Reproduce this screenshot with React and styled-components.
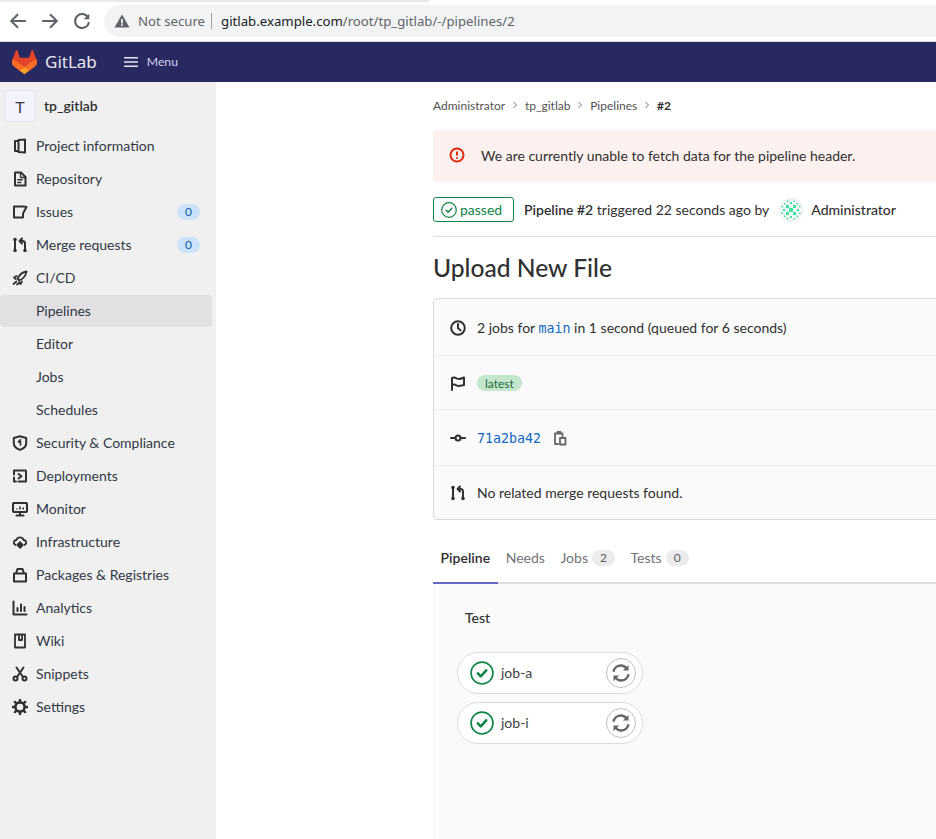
import React from 'react'
import styled, { createGlobalStyle } from 'styled-components'

const Global = createGlobalStyle`
    html, body {
        margin: 0;
        padding: 0;
        background: #fff;
        overflow: hidden;
    }
    * {
        box-sizing: border-box;
    }
`

const Page = styled.div`
    width: 936px;
    height: 839px;
    display: flex;
    flex-direction: column;
    overflow: hidden;
    font-family: Lato, "Liberation Sans", sans-serif;
    font-size: 14px;
    color: #303030;
`

const Browser = styled.div`
    position: relative;
    height: 42px;
    flex: none;
    display: flex;
    align-items: center;
    padding: 1px 0 0 9px;
    background: #fff;
    border-bottom: 1px solid #dadce0;
    &::before {
        content: '';
        position: absolute;
        left: 0;
        top: 0;
        width: 429px;
        height: 2px;
        background: #e8eaed;
    }
    svg {
        flex: none;
    }
`

const NavIcons = styled.div`
    display: flex;
    align-items: center;
    gap: 14px;
    margin-right: 13px;
    color: #5f6368;
`

const AddressBar = styled.div`
    flex: 1;
    height: 32px;
    display: flex;
    align-items: center;
    padding-left: 10px;
    border-radius: 16px 0 0 16px;
    background: #f1f3f4;
    font-family: "Noto Sans", sans-serif;
    font-size: 13.2px;
    color: #202124;
`

const Insecure = styled.span`
    margin-left: 8px;
    padding-right: 6px;
    color: #5f6368;
    border-right: 1px solid #9aa0a6;
    line-height: 16px;
`

const Url = styled.span`
    margin-left: 9px;
    span {
        color: #5f6368;
    }
`

const Navbar = styled.header`
    height: 40px;
    flex: none;
    display: flex;
    align-items: center;
    padding-left: 12px;
    background: #292961;
`

const Brand = styled.span`
    margin-left: 8px;
    padding-bottom: 1px;
    font-family: "Noto Sans", sans-serif;
    font-size: 17px;
    color: #e7e7f3;
`

const MenuButton = styled.span`
    display: flex;
    align-items: center;
    gap: 8px;
    margin-left: 26px;
    padding-bottom: 1px;
    font-size: 12.2px;
    color: #d1d1f0;
`

const Body = styled.div`
    flex: 1;
    display: flex;
    min-height: 0;
`

const Sidebar = styled.nav`
    width: 216px;
    flex: none;
    padding: 8px 4px 0 0;
    background: #f0f0f0;
`

const ProjectRow = styled.div`
    height: 32px;
    display: flex;
    align-items: center;
    gap: 8px;
    margin-bottom: 7px;
    padding-left: 4px;
`

const ProjectName = styled.span`
    padding-bottom: 2px;
    font-weight: 600;
    color: #303030;
`

const ProjectAvatar = styled.div`
    width: 32px;
    height: 32px;
    display: flex;
    align-items: center;
    justify-content: center;
    border: 1px solid #e3e3ee;
    border-radius: 4px;
    background: #f3f3fe;
    font-size: 16px;
    font-weight: 400;
    color: #3a3a44;
`

const NavItem = styled.div`
    height: 33px;
    display: flex;
    align-items: center;
    padding-left: ${p => (p.$sub ? '36px' : '12px')};
    padding-right: 12px;
    padding-bottom: 1px;
    border-top: 1px solid transparent;
    border-radius: 4px;
    background: ${p => (p.$active ? '#e1e1e4' : 'transparent')};
    background-clip: padding-box;
    color: #303845;
    svg {
        flex: none;
        margin-right: 8px;
        color: #303030;
    }
`

const NavLabel = styled.span`
    flex: 1;
`

const CountPill = styled.span`
    width: 23px;
    height: 16px;
    display: flex;
    align-items: center;
    justify-content: center;
    border-radius: 8px;
    background: #cbe2f9;
    font-size: 12px;
    color: #0b5cad;
`

const Main = styled.main`
    flex: 1;
    min-width: 0;
    padding-left: 217px;
    overflow: hidden;
`

const Content = styled.div`
    width: 620px;
`

const Crumbs = styled.div`
    height: 48px;
    display: flex;
    align-items: center;
    gap: 7.9px;
    padding-bottom: 2px;
    font-size: 12px;
    color: #525252;
    svg {
        flex: none;
        color: #737278;
    }
    b {
        color: #303030;
    }
`

const Alert = styled.div`
    height: 52px;
    display: flex;
    align-items: center;
    gap: 16px;
    padding: 0 0 2px 16px;
    background: #fcf1ef;
    color: #303030;
`

const StatusRow = styled.div`
    height: 55px;
    display: flex;
    align-items: center;
    border-bottom: 1px solid #dcdcde;
    padding-top: 1px;
    b {
        font-weight: 600;
    }
`

const StatusBadge = styled.span`
    width: 81px;
    height: 25px;
    display: flex;
    align-items: center;
    gap: 3px;
    padding-left: 7px;
    margin-right: 10px;
    border: 1px solid #108548;
    border-radius: 3px;
    color: #108548;
`

const Avatar = styled.span`
    display: flex;
    margin: 0 8px 0 10px;
`

const Author = styled.span`
    font-weight: 500;
`

const Title = styled.h1`
    margin: 0;
    height: 61px;
    display: flex;
    align-items: center;
    font-size: 24.6px;
    font-weight: 500;
    color: #303030;
`

const Card = styled.section`
    border: 1px solid #dcdcde;
    border-radius: 4px;
    background: #fafafa;
`

const CardRow = styled.div`
    height: ${p => p.$h}px;
    display: flex;
    align-items: center;
    gap: 11px;
    padding: ${p => (p.$last ? 0 : 1)}px 0 0 16px;
    border-bottom: ${p => (p.$last ? 'none' : '1px solid #ececef')};
    svg {
        flex: none;
    }
`

const Mono = styled.a`
    font-family: "DejaVu Sans Mono", monospace;
    font-size: 13.3px;
    color: #1068bf;
`

const LatestPill = styled.span`
    height: 16px;
    padding: 0 8px;
    display: flex;
    align-items: center;
    border-radius: 8px;
    background: #c3e6cd;
    font-size: 12px;
    color: #24663b;
`

const Tabs = styled.div`
    height: 64px;
    display: flex;
    align-items: stretch;
    padding-top: 20px;
    border-bottom: 2px solid #dcdcde;
`

const Tab = styled.div`
    display: flex;
    align-items: center;
    gap: 4px;
    padding: 0 8px 7px 7.6px;
    margin-bottom: -2px;
    color: ${p => (p.$active ? '#303030' : '#737278')};
    font-weight: ${p => (p.$active ? 600 : 400)};
    border-bottom: 2px solid ${p => (p.$active ? '#6666c4' : 'transparent')};
`

const TabCount = styled.span`
    width: 23px;
    height: 16px;
    display: flex;
    align-items: center;
    justify-content: center;
    border-radius: 8px;
    background: #ececef;
    font-size: 12px;
    color: #5e5e5e;
`

const Panel = styled.div`
    height: 260px;
    padding: 25px 0 0 24px;
    background: #fafafa;
`

const StageName = styled.div`
    height: 20px;
    padding-left: 8px;
    margin-bottom: 23px;
    font-weight: 500;
    color: #303030;
`

const JobPill = styled.div`
    width: 186px;
    height: 42px;
    display: flex;
    align-items: center;
    margin-bottom: 8px;
    padding: 0 6px 0 12px;
    border: 1px solid #dcdcde;
    border-radius: 21px;
    background: #fff;
    color: #404040;
`

const JobName = styled.span`
    flex: 1;
    margin-left: 7px;
    padding-bottom: 1px;
`

const RetryButton = styled.span`
    width: 30px;
    height: 30px;
    display: flex;
    align-items: center;
    justify-content: center;
    border: 1px solid #bfbfc3;
    border-radius: 50%;
    color: #666;
`

const Svg = ({ size = 16, children, ...rest }) => (
    <svg width={size} height={size} viewBox="0 0 16 16" fill="none" stroke="currentColor" strokeWidth="2" strokeLinecap="round" strokeLinejoin="round" {...rest}>
        {children}
    </svg>
)

const Merge = () => (
    <Svg>
        <circle cx="3" cy="2.500" r=".8" fill="currentColor" />
        <circle cx="3" cy="13.500" r=".8" fill="currentColor" />
        <circle cx="13" cy="13.500" r=".8" fill="currentColor" />
        <path d="M3 3v10M13 13V6.500c0-1.600-1-2.500-2.500-2.500H8M10 1.500 7.600 4 10 6.500" />
    </Svg>
)

const Chevron = () => (
    <svg width="4" height="8" viewBox="0 0 4 8" fill="none" stroke="currentColor" strokeWidth="1">
        <path d="M.5 1 3.500 4 .5 7" />
    </svg>
)

const icons = {
    info: <Svg><path d="M6 3H3v10h3" /><path d="M6.500 2 13 1.500v13L6.500 14z" /></Svg>,
    repo: <Svg><path d="M3 1.500h6L13.500 6v8.500H3z" /><path d="M8.500 2v4.500h4.500" strokeWidth="1.300" /><path d="M5.800 8.800h4.400M5.800 11.500h3" strokeWidth="1.500" /></Svg>,
    issues: <Svg><path d="M2 2.500h9.500l3 .5L11 9.500v4H2z" /></Svg>,
    merge: <Merge />,
    cicd: (
        <Svg strokeWidth="1.800">
            <path d="M14.500 1.500C10.500 2 7.500 4.500 5.500 8.500l2 2c4-2 6.500-5 7-9z" />
            <path d="M4.500 6 2 7.500 3.800 9M10 11.500 8.500 14 7 12.200M1.500 14l3-2.500M5 14.500l1.500-1" />
        </Svg>
    ),
    shield: <Svg><path d="M8 1.300 14.200 3v5c0 3.500-3 5.800-6.200 6.900C4.800 13.800 1.800 11.500 1.800 8V3z" /><path d="M8.500 4.800 6.500 6.800h2v3" strokeWidth="1.700" /></Svg>,
    deploy: <Svg><path d="M2 6.500V2.500h11.500a.5.5 0 0 1 .5.500v10.500H6.500M2 9.500v4h2" /><path d="M6.500 6 9.500 8.200 6.500 10.500" /></Svg>,
    monitor: (
        <Svg>
            <rect x="1" y="2" width="14" height="9" rx=".8" />
            <path d="M4.500 14.500h7M8 11.500v3" />
            <path d="M4.800 8.500V7.500M8 8.500V5.500M11.200 8.500V6.500" strokeWidth="1.600" strokeLinecap="butt" />
        </Svg>
    ),
    infra: (
        <Svg strokeWidth="1.800">
            <path d="M3.500 11C.5 9 1.500 6.300 4.500 6 5.500 2.500 10.500 2.500 11.500 6c3 .3 4 3 1 5" />
            <circle cx="8" cy="11" r="2" fill="currentColor" />
            <path d="M8 7.800v1M8 13.200v1M4.900 11h1M10.100 11h1" strokeWidth="1.400" />
        </Svg>
    ),
    packages: <Svg><path d="M2 6.500h12v8H2zM4 6.500 5.500 2h5L12 6.500" /></Svg>,
    analytics: <Svg><path d="M1.500 1.500v13h13M5.500 11V8M9 11V4.500M12.500 11V7" /></Svg>,
    wiki: <Svg><path d="M3 1.500h10v13H3zM7 2v5h3V2" strokeWidth="1.800" /></Svg>,
    snippets: (
        <Svg>
            <circle cx="3.500" cy="12.500" r="2" />
            <circle cx="12.500" cy="12.500" r="2" />
            <path d="M5 11 11.500 1.500M11 11 4.500 1.500" />
        </Svg>
    ),
    settings: (
        <Svg>
            <circle cx="8" cy="8" r="4.600" strokeWidth="2.600" />
            <path d="M8 .8v1.500M8 13.700v1.500M.8 8h1.500M13.700 8h1.500M2.900 2.900l1.100 1.100M12 12l1.100 1.100M2.900 13.100 4 12M12 4l1.100-1.100" strokeWidth="2.400" />
        </Svg>
    ),
}

const navItems = [
    { label: 'Project information', icon: 'info' },
    { label: 'Repository', icon: 'repo' },
    { label: 'Issues', icon: 'issues', count: 0 },
    { label: 'Merge requests', icon: 'merge', count: 0 },
    { label: 'CI/CD', icon: 'cicd' },
    { label: 'Pipelines', sub: true, active: true },
    { label: 'Editor', sub: true },
    { label: 'Jobs', sub: true },
    { label: 'Schedules', sub: true },
    { label: 'Security & Compliance', icon: 'shield' },
    { label: 'Deployments', icon: 'deploy' },
    { label: 'Monitor', icon: 'monitor' },
    { label: 'Infrastructure', icon: 'infra' },
    { label: 'Packages & Registries', icon: 'packages' },
    { label: 'Analytics', icon: 'analytics' },
    { label: 'Wiki', icon: 'wiki' },
    { label: 'Snippets', icon: 'snippets' },
    { label: 'Settings', icon: 'settings' },
]

const Logo = () => (
    <svg width="25" height="24" viewBox="0 0 25 24">
        <path d="M24.507 9.5l-.034-.09L21.082.562a.896.896 0 00-1.694.091l-2.29 7.01H7.825L5.535.653a.898.898 0 00-1.694-.09L.451 9.411.416 9.5a6.297 6.297 0 002.09 7.278l.012.01.03.022 5.16 3.867 2.56 1.935 1.554 1.176a1.051 1.051 0 001.268 0l1.555-1.176 2.56-1.935 5.197-3.89.014-.01A6.297 6.297 0 0024.507 9.5z" fill="#E24329" />
        <path d="M24.507 9.5l-.034-.09a11.44 11.44 0 00-4.56 2.051l-7.447 5.632 4.742 3.584 5.197-3.89.014-.01A6.297 6.297 0 0024.507 9.5z" fill="#FC6D26" />
        <path d="M7.707 20.677l2.56 1.935 1.555 1.176a1.051 1.051 0 001.268 0l1.555-1.176 2.56-1.935-4.743-3.584-4.755 3.584z" fill="#FCA326" />
        <path d="M5.01 11.461a11.43 11.43 0 00-4.56-2.05L.416 9.5a6.297 6.297 0 002.09 7.278l.012.01.03.022 5.16 3.867 4.745-3.584-7.444-5.632z" fill="#FC6D26" />
    </svg>
)

const identiconCells = [
    [10, 10, 4], [7, 7, 3], [14, 7, 3], [7, 14, 3], [14, 14, 3],
    [11, 4, 2], [11, 18, 2], [4, 11, 2], [18, 11, 2],
    [5, 5, 1.500], [17.500, 5, 1.500], [5, 17.500, 1.500], [17.500, 17.500, 1.500],
    [8, 2.500, 1.500], [14.500, 2.500, 1.500], [2.500, 8, 1.500], [20, 14.500, 1.500],
    [2.500, 14.500, 1.500], [20, 8, 1.500], [8, 20, 1.500], [14.500, 20, 1.500],
]

const Identicon = () => (
    <svg width="24" height="24" viewBox="0 0 24 24">
        <circle cx="12" cy="12" r="11.500" fill="#f5f6f6" stroke="#e8e8e8" strokeWidth=".8" />
        <g fill="#3ee0a0">
            {identiconCells.map(([x, y, s]) => (
                <rect key={`${x}-${y}`} x={x} y={y} width={s} height={s} />
            ))}
        </g>
    </svg>
)

const CheckCircle = ({ size = 16, stroke = 1.200, check = 1.500 }) => (
    <svg width={size} height={size} viewBox="0 0 16 16" fill="none" stroke="#108548" strokeLinecap="round" strokeLinejoin="round">
        <circle cx="8" cy="8" r="7.300" strokeWidth={stroke} />
        <path d="M5.200 8.200 7.200 10.200 10.800 6.200" strokeWidth={check} />
    </svg>
)

const RetryIcon = () => (
    <Svg size={20} strokeWidth="1.900" strokeLinecap="butt">
        <path d="M2 7c.5-3 3-5 6-5 2 0 3.500 1 4.500 2.500M14 9c-.5 3-3 5-6 5-2 0-3.500-1-4.500-2.500" />
        <path d="M14 1.500v4.500H9.500zM2 14.500V10h4.500z" fill="currentColor" stroke="none" />
    </Svg>
)

function Job({ name }) {
    return (
        <JobPill>
            <CheckCircle size={24} stroke={1.100} check={1.700} />
            <JobName>{name}</JobName>
            <RetryButton><RetryIcon /></RetryButton>
        </JobPill>
    )
}

export default function App() {
    return (
        <Page>
            <Global />
            <Browser>
                <NavIcons>
                    <Svg size={18} strokeWidth="1.800" strokeLinecap="butt" strokeLinejoin="miter"><path d="M15 8H2M8 2 2 8l6 6" /></Svg>
                    <Svg size={18} strokeWidth="1.800" strokeLinecap="butt" strokeLinejoin="miter"><path d="M1 8h13M8 2l6 6-6 6" /></Svg>
                    <Svg size={18} strokeWidth="1.800" strokeLinecap="butt"><path d="M13.500 5A6.200 6.200 0 1 0 14.200 9" /><path d="M14.500 1.500v5h-5z" fill="#5f6368" stroke="none" /></Svg>
                </NavIcons>
                <AddressBar>
                    <svg width="16" height="16" viewBox="0 0 16 16">
                        <path d="M8 1.500 15.500 14.500H.5z" fill="#5f6368" />
                        <path d="M7.200 6h1.600v4.500H7.200zM7.200 11.300h1.600v1.600H7.200z" fill="#fff" />
                    </svg>
                    <Insecure>Not secure</Insecure>
                    <Url>gitlab.example.com<span>/root/tp_gitlab/-/pipelines/2</span></Url>
                </AddressBar>
            </Browser>
            <Navbar>
                <Logo />
                <Brand>GitLab</Brand>
                <MenuButton>
                    <svg width="16" height="16" viewBox="0 0 16 16" fill="#e7e7f3">
                        <rect x="1" y="3" width="14" height="1.500" rx=".5" />
                        <rect x="1" y="7.200" width="14" height="1.500" rx=".5" />
                        <rect x="1" y="11.500" width="14" height="1.500" rx=".5" />
                    </svg>
                    Menu
                </MenuButton>
            </Navbar>
            <Body>
                <Sidebar>
                    <ProjectRow>
                        <ProjectAvatar>T</ProjectAvatar>
                        <ProjectName>tp_gitlab</ProjectName>
                    </ProjectRow>
                    {navItems.map(item => (
                        <NavItem key={item.label} $sub={item.sub} $active={item.active}>
                            {item.icon && icons[item.icon]}
                            <NavLabel>{item.label}</NavLabel>
                            {item.count !== undefined && <CountPill>{item.count}</CountPill>}
                        </NavItem>
                    ))}
                </Sidebar>
                <Main>
                    <Content>
                        <Crumbs>
                            Administrator <Chevron /> tp_gitlab <Chevron /> Pipelines <Chevron /> <b>#2</b>
                        </Crumbs>
                        <Alert>
                            <svg width="16" height="16" viewBox="0 0 16 16" fill="none" stroke="#dd2b0e">
                                <circle cx="8" cy="8" r="6.500" strokeWidth="2" />
                                <path d="M8 4.500v4M8 10.200v1.600" strokeWidth="2" />
                            </svg>
                            We are currently unable to fetch data for the pipeline header.
                        </Alert>
                        <StatusRow>
                            <StatusBadge><CheckCircle />passed</StatusBadge>
                            <span><b>Pipeline #2</b> triggered 22 seconds ago by</span>
                            <Avatar><Identicon /></Avatar>
                            <Author>Administrator</Author>
                        </StatusRow>
                        <Title>Upload New File</Title>
                        <Card>
                            <CardRow $h={57}>
                                <Svg><circle cx="8" cy="8" r="6.800" /><path d="M8 4v4.300l2.500 2" /></Svg>
                                <span>2 jobs for <Mono>main</Mono> in 1 second (queued for 6 seconds)</span>
                            </CardRow>
                            <CardRow $h={54}>
                                <Svg><path d="M2 15V3c3.500-1.500 4.500 1 6.500 1s3.500-.5 5.500-1.500V10c-2 .5-3.500 1-5.500 1C6.500 11 5.500 8.500 2 10" /></Svg>
                                <LatestPill>latest</LatestPill>
                            </CardRow>
                            <CardRow $h={56}>
                                <Svg><circle cx="8" cy="8" r="2.500" /><path d="M1 8h4.500M10.500 8H15" /></Svg>
                                <Mono>71a2ba42</Mono>
                                <Svg stroke="#666" strokeWidth="1.800"><path d="M3 10.500V3.500h7.500V6M5.500 3.500V1.800h3v1.700M3 10.500v3.500h3" /><rect x="8" y="8" width="5.500" height="6.500" /></Svg>
                            </CardRow>
                            <CardRow $h={53} $last>
                                <Merge />
                                No related merge requests found.
                            </CardRow>
                        </Card>
                        <Tabs>
                            <Tab $active>Pipeline</Tab>
                            <Tab>Needs</Tab>
                            <Tab>Jobs<TabCount>2</TabCount></Tab>
                            <Tab>Tests<TabCount>0</TabCount></Tab>
                        </Tabs>
                        <Panel>
                            <StageName>Test</StageName>
                            <Job name="job-a" />
                            <Job name="job-i" />
                        </Panel>
                    </Content>
                </Main>
            </Body>
        </Page>
    )
}
